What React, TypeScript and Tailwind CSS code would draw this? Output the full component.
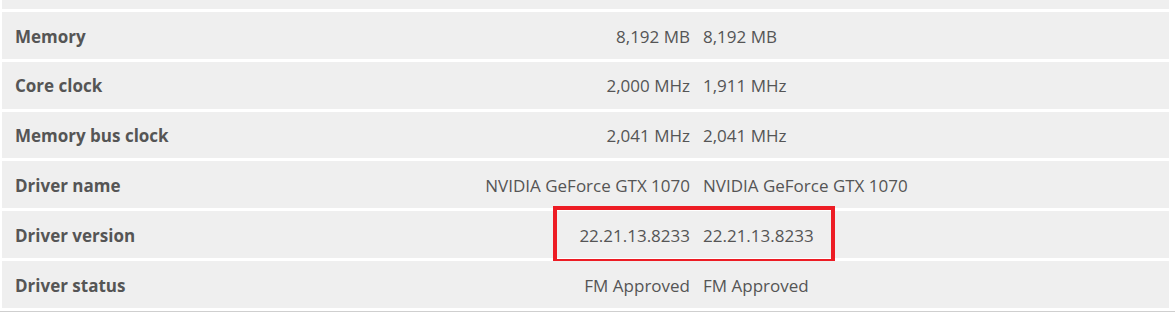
const ROWS = [
  { label: "Memory", a: "8,192 MB", b: "8,192 MB" },
  { label: "Core clock", a: "2,000 MHz", b: "1,911 MHz" },
  { label: "Memory bus clock", a: "2,041 MHz", b: "2,041 MHz" },
  { label: "Driver name", a: "NVIDIA GeForce GTX 1070", b: "NVIDIA GeForce GTX 1070" },
  { label: "Driver version", a: "22.21.13.8233", b: "22.21.13.8233", mark: true },
  { label: "Driver status", a: "FM Approved", b: "FM Approved" },
];

export default function App() {
  return (
    <div
      className="h-[321px] w-[1175px] overflow-hidden bg-white text-[17px] text-[#555]"
      style={{ fontFamily: '"Open Sans", "Liberation Sans", sans-serif' }}
    >
      <div className="flex flex-col gap-[3px] pl-[2px] pr-[6px]">
        {/* tail of the previous row */}
        <div className="h-[9px] bg-[#efefef]" />
        {ROWS.map((r) => (
          <div key={r.label} className="relative flex h-[46.8px] items-center bg-[#efefef] pt-[2px]">
            <div className="flex-1 pl-[13px] font-bold">{r.label}</div>
            <div className="w-[260px] pr-[13px] text-right">{r.a}</div>
            <div className="w-[466px]">{r.b}</div>
            {r.mark && (
              <div className="pointer-events-none absolute left-[551px] top-[-5px] h-[57px] w-[282px] border-[4px] border-[#ed1c24]" />
            )}
          </div>
        ))}
      </div>
      <div className="mt-[3px] h-px bg-[#cfcfcf]" />
    </div>
  );
}
